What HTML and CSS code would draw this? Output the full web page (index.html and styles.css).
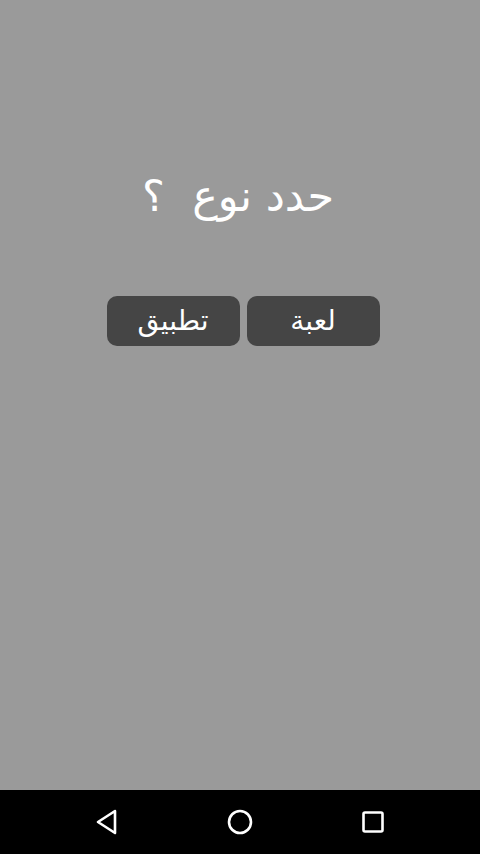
FILE: index.html
```html
<!DOCTYPE html>
<html lang="ar">
<head>
<meta charset="utf-8">
<link rel="stylesheet" href="styles.css">
</head>
<body>
<div class="screen">
  <main class="content">
    <h1 class="title" dir="rtl">حدد نوع&nbsp;&nbsp;؟</h1>
    <div class="choices" dir="rtl">
      <button class="choice">لعبة</button>
      <button class="choice">تطبيق</button>
    </div>
  </main>
  <nav class="navbar">
    <svg class="nav-icon" width="28" height="28" viewBox="0 0 28 28"><path d="M22 3 L5 14 L22 25 Z" fill="none" stroke="#fff" stroke-width="2.6" stroke-linejoin="round"/></svg>
    <svg class="nav-icon" width="28" height="28" viewBox="0 0 28 28"><circle cx="14" cy="14" r="11" fill="none" stroke="#fff" stroke-width="2.6"/></svg>
    <svg class="nav-icon" width="28" height="28" viewBox="0 0 28 28"><rect x="4.5" y="4.5" width="19" height="19" rx="1.5" fill="none" stroke="#fff" stroke-width="2.6"/></svg>
  </nav>
</div>
</body>
</html>
```
FILE: styles.css
```css
html, body {
  margin: 0;
  padding: 0;
}
body {
  width: 480px;
  height: 854px;
  overflow: hidden;
  font-family: "DejaVu Sans", "Noto Sans", sans-serif;
}
.screen {
  display: flex;
  flex-direction: column;
  height: 854px;
}
.content {
  flex: 1;
  background: #9a9a9a;
  display: flex;
  flex-direction: column;
  align-items: center;
  padding-top: 166px;
  box-sizing: border-box;
}
.title {
  margin: 0 4px 0 0;
  color: #fff;
  font-weight: normal;
  font-size: 43px;
  line-height: 60px;
  height: 60px;
}
.choices {
  margin-top: 70px;
  display: flex;
  gap: 7px;
  padding-left: 6px;
}
.choice {
  width: 133px;
  height: 50px;
  border: none;
  border-radius: 10px;
  background: #454545;
  color: #fff;
  font-family: "DejaVu Sans", sans-serif;
  font-size: 28px;
  line-height: 50px;
  padding: 0;
}
.navbar {
  height: 64px;
  background: #000;
  display: flex;
  align-items: center;
  justify-content: space-between;
  padding: 0 93px;
}
.nav-icon {
  display: block;
}
```
